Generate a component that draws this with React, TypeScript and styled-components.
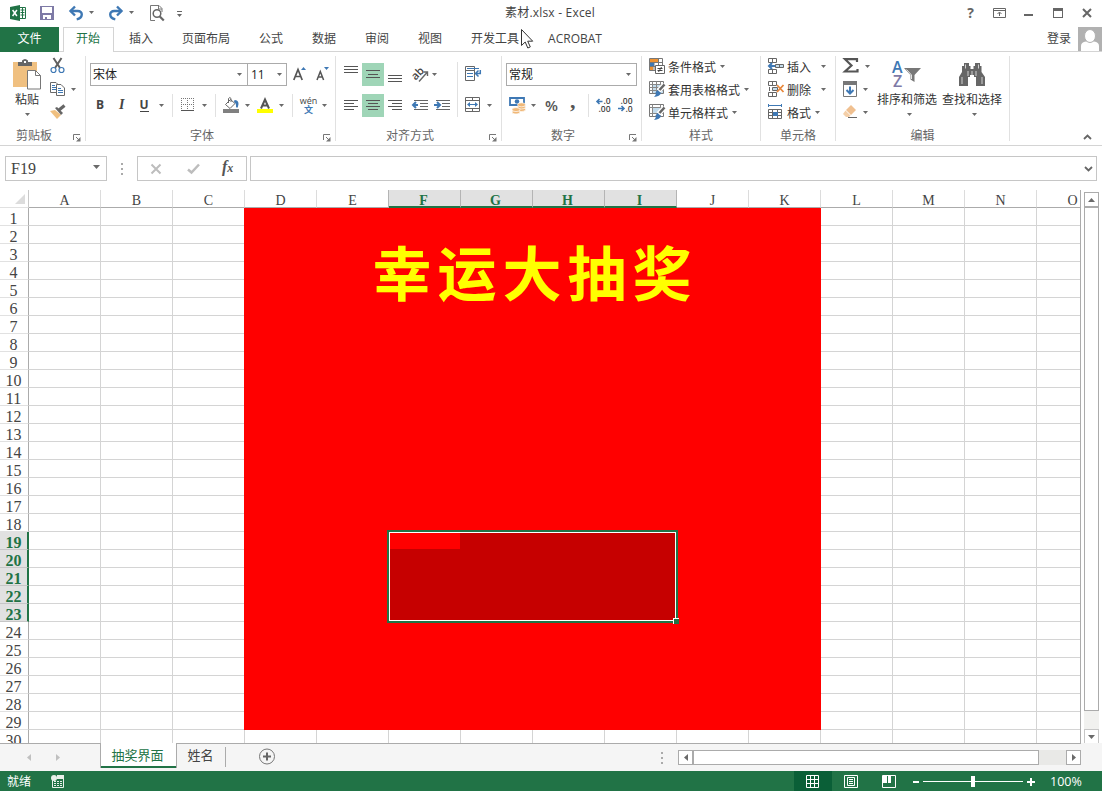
import React from "react";
import styled, { createGlobalStyle, css } from "styled-components";

const GREEN = "#217346";
const LINE = "#ababab";
const UI = `"Open Sans", "Noto Sans CJK SC", sans-serif`;
const SONG = `"Liberation Serif", "Noto Sans CJK SC", serif`;

const Global = createGlobalStyle`
  * { box-sizing: border-box; }
  body { margin: 0; background: #fff; font: 12px/16px ${UI}; color: #444; }
  button { font: inherit; color: inherit; background: none; border: 0; padding: 0; }
  svg { display: block; flex: none; overflow: visible; }
`;

const Window = styled.div`
  display: flex;
  flex-direction: column;
  width: 1102px;
  height: 791px;
  overflow: hidden;
  background: #fff;
`;

/* ---------- icons ---------- */

type IconProps = { w: number; h: number; children: React.ReactNode; crisp?: boolean };
const Icon = ({ w, h, children, crisp }: IconProps) => (
  <svg width={w} height={h} viewBox={`0 0 ${w} ${h}`} fill="none" shapeRendering={crisp ? "crispEdges" : undefined}>
    {children}
  </svg>
);
const Arrow = () => (
  <Icon w={5} h={3}><path d="M0 0h5L2.5 3z" fill="#6a6a6a" /></Icon>
);
const Lines = ({ rows, w = 15, h = 12 }: { rows: [number, number, number][]; w?: number; h?: number }) => (
  <Icon w={w} h={h} crisp>
    {rows.map(([x, y, len]) => <rect key={y} x={x} y={y} width={len} height={1} fill="#555" />)}
  </Icon>
);

const ExcelLogo = () => (
  <Icon w={16} h={16}>
    <path d="M9.5 2.5h6v11h-6" stroke={GREEN} fill="#fff" />
    <path d="M10.500 5h4M10.500 7.500h4M10.500 10h4M12.500 3v10" stroke={GREEN} />
    <path d="M0 2 10 0v16L0 14z" fill={GREEN} />
    <path d="m2.6 5 4.3 6M6.9 5l-4.3 6" stroke="#fff" strokeWidth="1.5" />
  </Icon>
);
const SaveIcon = () => (
  <Icon w={14} h={14} crisp>
    <path d="M0 0h14v14H0z" fill="#7e7aa6" />
    <path d="M2 1h10v6H2zM3 9h8v4H7v-2H5v2H3z" fill="#fff" />
  </Icon>
);
const UndoIcon = ({ flip }: { flip?: boolean }) => (
  <Icon w={14} h={16}>
    <g transform={flip ? "translate(14 0) scale(-1 1)" : undefined} stroke="#3e78b4" strokeWidth="2.4">
      <path d="M1.500 6h7.200c5.600 0 5.600 6.800-1 8.300" />
      <path d="M6 1.500 1.500 6 6 10.500" />
    </g>
  </Icon>
);
const PreviewIcon = () => (
  <Icon w={15} h={16}>
    <path d="M5 15.500H.5V.5h8.500l3 3V7" stroke="#777" />
    <path d="M8.500.5v3.500H12" stroke="#777" />
    <circle cx="7" cy="8.500" r="3.800" stroke="#666" strokeWidth="1.500" />
    <path d="m9.800 11.500 4 4" stroke="#666" strokeWidth="2.200" />
  </Icon>
);
const CustomizeIcon = () => (
  <Icon w={5} h={6}><path d="M0 .5h5" stroke="#666" /><path d="M0 3h5L2.500 6z" fill="#666" /></Icon>
);

const PasteIcon = () => (
  <Icon w={29} h={31}>
    <path d="M0 3h24v25H0z" fill="#f0c080" />
    <path d="M5 3h4V1.500Q12 -1.500 15 1.500V3h4v4H5z" fill="#666" />
    <path d="M11 2h2v2h-2z" fill="#fff" />
    <path d="M14.500 11.500h8l5 5v13.500h-13z" fill="#fff" stroke="#777" />
    <path d="M22.500 11.500v5h5" stroke="#777" />
  </Icon>
);
const CutIcon = () => (
  <Icon w={15} h={16}>
    <path d="m3.500 0 6.500 10M11.500 0 5 10" stroke="#606060" strokeWidth="2" />
    <circle cx="3.500" cy="12" r="2.500" stroke="#3e78b4" strokeWidth="1.200" />
    <circle cx="11.500" cy="12" r="2.500" stroke="#3e78b4" strokeWidth="1.200" />
  </Icon>
);
const CopyIcon = () => (
  <Icon w={15} h={14}>
    <path d="M.5.5H6L8.500 3v7.500h-8z" stroke="#6a6a6a" fill="#fff" />
    <path d="M2 3.500h3M2 5.500h4M2 7.500h4" stroke="#3e78b4" />
    <path d="M6.500 2.500H11l3.500 3.500v7.500h-8z" stroke="#6a6a6a" fill="#fff" />
    <path d="M8 6.500h3M8 8.500h5M8 10.500h5" stroke="#3e78b4" />
  </Icon>
);
const BrushIcon = () => (
  <Icon w={16} h={14}>
    <path d="m0 6 5-1 6 5-4 4z" fill="#f0c080" />
    <path d="m5 3 2-1 6 6-2 2z" fill="#666" />
    <path d="m9 5 5.500-4.500" stroke="#666" strokeWidth="3.200" />
  </Icon>
);
const FontSize = ({ small }: { small?: boolean }) => (
  <Icon w={14} h={17}>
    <path d={small ? "M8 1h5l-2.500 3z" : "M8 4h5l-2.500-3z"} fill="#3e78b4" />
    {small
      ? <path d="m1 14 3.300-8.500L7.600 14M2.300 11h4" stroke="#555" strokeWidth="1.500" />
      : <path d="m.8 14 4.200-10.500L9.200 14M2.300 10.500h5.400" stroke="#555" strokeWidth="1.700" />}
  </Icon>
);
const BordersIcon = () => (
  <Icon w={13} h={13} crisp>
    <path d="M0 .5h13M0 6.500h13M.5 0v13M6.500 0v13M12.500 0v13" stroke="#777" strokeDasharray="1 1" />
    <path d="M0 12.500h13" stroke="#555" />
  </Icon>
);
const FillIcon = () => (
  <Icon w={16} h={17}>
    <path d="m2.500 7.500 5-5 4.500 4-5 5z" stroke="#666" fill="#fff" />
    <path d="M5.500 6V1.500q1.500-2 2.500 0V5" stroke="#666" />
    <path d="M11.500 3q4 0 4 4-.3 3-1.500 4-1.500-1-1-3 0-2-2-3z" fill="#3e78b4" />
    <path d="M0 12h16v4H0z" fill="#808080" />
  </Icon>
);
const FontColorIcon = () => (
  <Icon w={16} h={17}>
    <path d="M4 11.500 8 2.500l4 9M5.500 8.500h5" stroke="#555" strokeWidth="2" />
    <path d="M0 12h16v4H0z" fill="#ff0" />
  </Icon>
);
const OrientIcon = () => (
  <Icon w={17} h={17}>
    <text x="0" y="12" transform="rotate(-45 5 9)" fontSize="11" fontWeight="600" fill="#444" fontFamily="Open Sans">ab</text>
    <path d="M7 15.500 15 6.500M11.500 6h4v4" stroke="#666" strokeWidth="1.400" />
  </Icon>
);
const WrapIcon = () => (
  <Icon w={16} h={17}>
    <path d="M.5.5h9v4h-9zM.5 4.500h9v10h-9z" stroke="#666" />
    <path d="M2 2.500h12M2 7.500h6M2 10.500h6" stroke="#3e78b4" />
    <path d="M15.300 4v3.500h-4M13.500 4.500l-3 3 3 3" stroke="#3e78b4" strokeWidth="1.500" />
  </Icon>
);
const MergeIcon = () => (
  <Icon w={15} h={17}>
    <path d="M.5.5h14v14H.5zM.5 3.500h14M.5 11.500h14M7.500.5v3M7.500 11.500v3" stroke="#666" />
    <path d="M3 7.500h9" stroke="#3e78b4" />
    <path d="M5 5v5L2 7.500zM10 5v5l3-2.500z" fill="#3e78b4" />
  </Icon>
);
const IndentIcon = ({ right }: { right?: boolean }) => (
  <Icon w={16} h={11}>
    <path d="M2 .5h14M8 3.500h8M8 6.500h8M2 9.500h14" stroke="#666" />
    <path d="M-1 2h8v6h-8z" fill="#fff" />
    <path d={right ? "M0 5h5M3 2l3 3-3 3" : "M6 5H1M4 2 1 5l3 3"} stroke="#3e78b4" strokeWidth="2" />
  </Icon>
);
const CurrencyIcon = () => (
  <Icon w={17} h={17}>
    <path d="M1 1h14v7H1z" stroke="#3e78b4" strokeWidth="1.800" fill="#fff" />
    <circle cx="8" cy="4.500" r="2.300" fill="#3e78b4" />
    <g fill="#f0b878" stroke="#fff" strokeWidth=".7">
      <ellipse cx="12.500" cy="12.500" rx="4" ry="2" /><ellipse cx="12.500" cy="10" rx="4" ry="2" />
      <ellipse cx="12.500" cy="7.800" rx="4" ry="2" />
      <ellipse cx="7" cy="15" rx="4" ry="2" /><ellipse cx="7" cy="12.600" rx="4" ry="2" />
    </g>
  </Icon>
);
const DecimalIcon = ({ less }: { less?: boolean }) => (
  <Icon w={15} h={17}>
    <g fontFamily="Open Sans" fontSize="8.500" fontWeight="600" fill="#444">
      <text x={less ? 2.500 : 7.500} y="7">{less ? ".00" : ".0"}</text>
      <text x={less ? 7.500 : 2.500} y="14.500">{less ? ".0" : ".00"}</text>
    </g>
    <path d={less ? "M0 11.500h5M3.500 9 6 11.500 3.500 14" : "M6.500 4.500h-5M3.500 2 1 4.500 3.500 7"} stroke="#3e78b4" strokeWidth="1.600" />
  </Icon>
);
const CondFormatIcon = () => (
  <Icon w={16} h={16}>
    <path d="M.5.5h13v12H.5zM.5 4.500h13M.5 8.500h13M5 .5v12M9.500.5v12" stroke="#777" />
    <path d="M1 1h8v3H1z" fill="#ed9232" /><path d="M1 5h4v3H1z" fill="#3e78b4" /><path d="M1 9h3v3H1z" fill="#ed9232" />
    <path d="M6.500 7.500h9v8h-9z" fill="#fff" stroke="#666" />
    <path d="M8.500 10.500h5M8.500 12.500h5M12.500 9l-3 5" stroke="#444" />
  </Icon>
);
const TableFormatIcon = ({ single }: { single?: boolean }) => (
  <Icon w={16} h={16}>
    <path d="M.5.5h14v12H.5z" stroke="#777" fill="#fff" />
    {single
      ? <path d="M4 4h7v5H4z" fill="#c4dcec" />
      : <path d="M4 4h10v8H4z" fill="#c4dcec" />}
    <path d="M.5 3.500h14M3.500.5v12M11.500.5v12M.5 9.500h14" stroke="#888" />
    {!single && <path d="M7.500.5v12M.5 6.500h14" stroke="#888" />}
    <path d="M15.500 3.500 9.500 10" stroke="#fff" strokeWidth="5" />
    <path d="M15.500 3.500 10.500 9" stroke="#666" strokeWidth="2.600" />
    <path d="m8.500 9 3.500 3q-1 3.500-7 4 2.500-2.500 1.500-4.500z" fill="#3e78b4" />
  </Icon>
);
const CellsIcon = ({ kind }: { kind: "insert" | "delete" | "format" }) => (
  <Icon w={16} h={16}>
    {kind === "format" ? (
      <>
        <path d="M1 1.500h12M.5 0v3M13.500 0v3" stroke="#3e78b4" />
        <path d="M.5 5.500h13v9H.5zM.5 8.500h13M.5 11.500h13M4.500 5.500v9M9.500 5.500v9" stroke="#666" />
        <path d="M5 8h5v4H5z" fill="#3e78b4" />
      </>
    ) : (
      <>
        <path d="M.5.5h8v4h-8zM4.500.5v4M.5 11.500h8v4h-8zM4.500 11.500v4" stroke="#666" fill="#fff" />
        {kind === "insert" ? (
          <>
            <path d="M7.500 6.500h8v3h-8zM11.500 6.500v3" fill="#c4dcec" stroke="#666" />
            <path d="M7 8H2M4 5 1 8l3 3" stroke="#3e78b4" strokeWidth="2" />
          </>
        ) : (
          <>
            <path d="M4.500 6.500h5v3h-5zM1.500 6v4" fill="#c4dcec" stroke="#666" />
            <path d="m9 4 6.500 7M15.500 4 9 11" stroke="#e8873a" strokeWidth="1.800" />
          </>
        )}
      </>
    )}
  </Icon>
);
const SigmaIcon = () => (
  <Icon w={16} h={16}><path d="M14 4V1.200H2L8.500 7.500 2 13.500h12.500V11" stroke="#555" strokeWidth="2.200" /></Icon>
);
const FillDownIcon = () => (
  <Icon w={14} h={16}>
    <path d="M.5.5h13v15H.5z" stroke="#777" /><path d="M0 0h14v4H0z" fill="#777" />
    <path d="M7 5.500v7M3.500 9 7 12.500 10.500 9" stroke="#3e78b4" strokeWidth="2" />
  </Icon>
);
const EraserIcon = () => (
  <Icon w={14} h={14}>
    <path d="m8 0 5 5-5 5-5-5z" fill="#f0c090" /><path d="m2.500 5.500 5 5-1.500 1.500H3L0 9z" fill="#f4cfa8" />
    <path d="M5 12.500h9" stroke="#666" />
  </Icon>
);
const SortIcon = () => (
  <Icon w={30} h={27}>
    <g fontFamily="Open Sans" fontSize="16" fontWeight="600">
      <text x="0" y="12" fill="#3e78b4">A</text><text x="1" y="26" fill="#7e7aa6">Z</text>
    </g>
    <path d="M12 7h17l-6.500 7v7l-4-2.500V14z" fill="#777" /><path d="m14.500 8.500 5 5.500v4" stroke="#fff" strokeWidth=".8" />
  </Icon>
);
const FindIcon = () => (
  <Icon w={26} h={25}>
    <path d="M5 1h5v3h1.500v3h3V4H16V1h5v3h1.500v6l3.500 5v9h-9v-9h-2v-2h-4v2H9v9H0v-9l3-5V4h2z" fill="#666" />
    <path d="M6.500 2.500v4M9 9v5M3 15v7M23 15v7M19.500 2.500v4M17 9v5M13 9v4" stroke="#ddd" strokeWidth=".9" />
  </Icon>
);
const LauncherIcon = () => (
  <Icon w={8} h={8}>
    <path d="M.5 6V.5H7" stroke="#777" /><path d="m3 3 3 3" stroke="#777" /><path d="M7.500 3v4.500H3z" fill="#777" />
  </Icon>
);
const Chevron = ({ down }: { down?: boolean }) => (
  <Icon w={9} h={6}><path d={down ? "m1 1 3.500 3.500L8 1" : "M1 5l3.500-3.500L8 5"} stroke="#666" strokeWidth="1.800" /></Icon>
);
const Triangle = ({ dir, color = "#6a6a6a" }: { dir: "up" | "down" | "left" | "right"; color?: string }) => {
  const d = { up: "M0 4h7L3.500 0z", down: "M0 0h7L3.500 4z", left: "M4 0v7L0 3.500z", right: "M0 0v7l4-3.500z" }[dir];
  const wide = dir === "up" || dir === "down";
  return <Icon w={wide ? 7 : 4} h={wide ? 4 : 7}><path d={d} fill={color} /></Icon>;
};

/* ---------- title bar ---------- */

const TitleBar = styled.header`
  display: grid;
  grid-template-columns: 400px 300px 402px;
  height: 27px;
`;
const Title = styled.div`
  text-align: center;
  line-height: 26px;
  letter-spacing: 0.2px;
`;
const QuickAccess = styled.div`
  display: flex;
  align-items: center;
  height: 26px;
  padding-left: 10px;
`;
const WindowButtons = styled.div`
  display: flex;
  align-items: center;
  justify-content: flex-end;
  height: 26px;
  padding-right: 10px;
`;
const Tool = styled.button<{ $left?: number; $top?: number }>`
  display: flex;
  align-items: center;
  flex: none;
  margin-left: ${(p) => p.$left ?? 0}px;
  margin-top: ${(p) => p.$top ?? 0}px;
`;
const HelpMark = styled.span`
  font-weight: 700;
  font-size: 14px;
  color: #666;
`;

/* ---------- ribbon tabs ---------- */

const TabBar = styled.nav`
  display: flex;
  height: 25px;
  line-height: 24px;
  border-bottom: 1px solid #d4d4d4;
`;
const FileTab = styled.div`
  width: 59px;
  height: 25px;
  background: ${GREEN};
  color: #fff;
  text-align: center;
`;
const ActiveTab = styled.div`
  width: 51px;
  height: 25px;
  margin-left: 4px;
  padding-right: 1px;
  border: 1px solid #d4d4d4;
  border-bottom: 0;
  background: #fff;
  color: ${GREEN};
  text-align: center;
  line-height: 22px;
`;
const TabList = styled.div`
  display: flex;
  flex: 1;
  gap: 29px;
  padding-left: 15px;
  white-space: nowrap;
`;
const Account = styled.div`
  display: flex;
  gap: 7px;
  line-height: 23px;
`;
const Avatar = styled.div`
  width: 24px;
  height: 24px;
  background: #b1b1b1;
`;
const Cursor = styled.div`
  position: absolute;
  left: 521px;
  top: 29px;
`;

/* ---------- ribbon ---------- */

const Ribbon = styled.section`
  display: flex;
  height: 94px;
  padding-top: 4px;
  border-bottom: 1px solid #d4d4d4;
  line-height: 16px;
`;
const Group = styled.div<{ $w: number }>`
  display: flex;
  flex-direction: column;
  width: ${(p) => p.$w}px;
  height: 85px;
  border-right: 1px solid #e1e1e1;
`;
const GroupBody = styled.div<{ $column?: boolean }>`
  display: flex;
  flex: none;
  flex-direction: ${(p) => (p.$column ? "column" : "row")};
  height: 72px;
`;
const GroupFooter = styled.div`
  display: flex;
  flex: none;
  height: 13px;
  line-height: 16px;
  color: #666;
`;
const GroupLabel = styled.span`
  flex: 1;
  text-align: center;
`;
const Launcher = styled.span`
  width: 12px;
  padding-top: 6px;
  margin-left: 5px;
`;
const ToolRow = styled.div<{ $pad?: number; $top?: number }>`
  display: flex;
  align-items: center;
  height: 23px;
  margin-top: ${(p) => p.$top ?? 0}px;
  padding-left: ${(p) => p.$pad ?? 0}px;
`;
const Divider = styled.span<{ $left: number; $h?: number }>`
  flex: none;
  width: 1px;
  height: ${(p) => p.$h ?? 23}px;
  margin-left: ${(p) => p.$left}px;
  background: #e1e1e1;
`;
const Combo = styled.div<{ $w: number; $joined?: boolean }>`
  display: flex;
  flex: none;
  align-items: center;
  justify-content: space-between;
  width: ${(p) => p.$w}px;
  height: 23px;
  padding: 0 5px 0 2px;
  border: 1px solid ${LINE};
  ${(p) => p.$joined && css`border-left: 0; padding: 0 4px 0 3px;`}
  color: #222;
`;
const Toggle = styled.button`
  display: flex;
  align-items: center;
  justify-content: center;
  width: 22px;
  height: 23px;
  margin-left: 3px;
  background: #9fd5b7;
`;
const BigButton = styled.div<{ $w: number; $left: number }>`
  display: flex;
  flex-direction: column;
  align-items: center;
  width: ${(p) => p.$w}px;
  margin-left: ${(p) => p.$left}px;
  white-space: nowrap;
  color: #333;
`;
const BigIcon = styled.span`
  display: flex;
  align-items: center;
  height: 37px;
  margin-bottom: -1px;
`;
const BigArrow = styled.span<{ $shift?: number }>`
  margin-top: 5px;
  padding-left: ${(p) => p.$shift ?? 0}px;
`;
const Stack = styled.div<{ $left: number; $lift?: boolean }>`
  display: flex;
  flex-direction: column;
  margin-left: ${(p) => p.$left}px;
  margin-top: ${(p) => (p.$lift ? -1 : 0)}px;
  color: #333;
`;
const StackRow = styled.div<{ $arrow?: number }>`
  display: flex;
  align-items: center;
  height: 22px;
  margin-bottom: 1px;
  gap: 3px;
  white-space: nowrap;
  svg:not(:first-child) {
    margin-left: ${(p) => p.$arrow ?? 1}px;
    margin-top: 1px;
  }
`;
const Caption = styled.span`
  padding-top: 3px;
  line-height: 17px;
`;
const Letter = styled.span<{ $kind: "b" | "i" | "u" }>`
  font-weight: 700;
  line-height: 15px;
  margin-bottom: 2px;
  color: #444;
  ${(p) => p.$kind === "i" && css`font-family: "Liberation Serif"; font-size: 14px; font-style: italic;`}
  ${(p) => p.$kind === "u" && css`margin-bottom: 0; line-height: 12px; border-bottom: 1px solid #444;`}
`;
const Pinyin = styled.span`
  display: flex;
  flex-direction: column;
  align-items: center;
  width: 16px;
  font: 9px/8px ${UI};
  b { font: 700 9px/9px "Noto Sans CJK SC"; color: #3e78b4; }
`;
const Percent = styled.span`
  margin-bottom: 2px;
  font-size: 15px;
  font-weight: 600;
  color: #555;
`;
const Comma = styled.span`
  font: 700 22px/12px "Liberation Serif";
  height: 22px;
  color: #555;
`;
const AlignTop = styled.div`
  display: flex;
  flex-direction: column;
  width: 121px;
`;
const Collapse = styled.div`
  display: flex;
  flex: 1;
  align-items: flex-end;
  justify-content: flex-end;
  padding: 0 10px 5px 0;
`;

/* ---------- formula bar ---------- */

const FormulaBar = styled.section`
  display: flex;
  height: 44px;
  padding: 10px 5px 0;
`;
const Field = styled.div<{ $w?: number; $left?: number }>`
  display: flex;
  align-items: center;
  justify-content: space-between;
  ${(p) => (p.$w ? `width: ${p.$w}px;` : "flex: 1;")}
  height: 25px;
  margin-left: ${(p) => p.$left ?? 0}px;
  padding: 0 3px 0 5px;
  border: 1px solid #c6c6c6;
  font: 16px/22px ${SONG};
`;
const NameBox = styled(Field)`
  padding-right: 6px;
  & > svg { margin-bottom: 3px; }
`;
const FieldTools = styled(Field)`
  justify-content: flex-start;
  padding-left: 13px;
`;
const Fx = styled.span`
  margin: 0 0 2px 22px;
  font: italic 700 16px/16px "Liberation Serif";
  color: #555;
  small { font-size: 12px; }
`;
const Dots = styled.span<{ $left: number; $top: number }>`
  display: flex;
  flex-direction: column;
  gap: 3px;
  width: 2px;
  margin: ${(p) => p.$top}px 0 0 ${(p) => p.$left}px;
  i { width: 2px; height: 2px; background: #aaa; }
`;

/* ---------- worksheet ---------- */

const Sheet = styled.main`
  display: flex;
  height: 553px;
`;
const Grid = styled.div`
  position: relative;
  width: 1081px;
  height: 553px;
  overflow: hidden;
  border-right: 1px solid ${LINE};
`;
const GridRow = styled.div`
  display: flex;
  width: 1109px;
  height: 18px;
`;
const Corner = styled.div`
  display: flex;
  flex: none;
  align-items: flex-end;
  justify-content: flex-end;
  width: 29px;
  height: 18px;
  padding: 0 3px 3px 0;
  border-right: 1px solid #c8c8c8;
  border-bottom: 1px solid #e1e1e1;
`;
const ColHead = styled.div<{ $on: boolean; $beforeOn: boolean }>`
  flex: none;
  width: 72px;
  height: 18px;
  padding-right: ${(p) => (p.$on ? 2 : 0)}px;
  border-right: 1px solid ${(p) => (p.$on || p.$beforeOn ? "#b4b4b4" : "#dcdcdc")};
  border-bottom: ${(p) => (p.$on ? `2px solid ${GREEN}` : `1px solid ${LINE}`)};
  background: ${(p) => (p.$on ? "#e1e1e1" : "#fff")};
  color: ${(p) => (p.$on ? GREEN : "#444")};
  font: ${(p) => (p.$on ? 700 : 400)} 14px/22px ${SONG};
  text-align: center;
`;
const RowHead = styled.div<{ $on: boolean }>`
  flex: none;
  width: 29px;
  height: 18px;
  padding-right: ${(p) => (p.$on ? 0 : 1)}px;
  border-right: ${(p) => (p.$on ? `2px solid ${GREEN}` : `1px solid ${LINE}`)};
  border-bottom: 1px solid ${(p) => (p.$on ? "#c6c6c6" : "#e1e1e1")};
  background: ${(p) => (p.$on ? "#e1e1e1" : "#fff")};
  color: ${(p) => (p.$on ? GREEN : "#444")};
  font: ${(p) => (p.$on ? 700 : 400)} 16px/21px ${SONG};
  text-align: center;
`;
const Cell = styled.div<{ $red: boolean; $first: boolean }>`
  flex: none;
  width: 72px;
  height: 18px;
  border: 0 solid ${(p) => (p.$red ? "#f00" : "#d4d4d4")};
  border-width: 0 1px 1px 0;
  background: ${(p) => (p.$red ? "#f00" : "#fff")};
  ${(p) => p.$first && css`
    width: 73px;
    margin-left: -1px;
  `}
`;
const Banner = styled.div`
  position: absolute;
  left: 247px;
  top: 34px;
  width: 576px;
  text-align: center;
  font: 700 59px/94px "Noto Sans CJK SC", sans-serif;
  letter-spacing: 6px;
  color: #ff0;
`;
const Selection = styled.div`
  position: absolute;
  left: 387px;
  top: 340px;
  width: 291px;
  height: 93px;
  border: 2px solid ${GREEN};
`;
const SelectionFill = styled.div`
  height: 89px;
  border: 1px solid #fff;
  background: #c60000;
`;
const ActiveCell = styled.div`
  width: 70px;
  height: 16px;
  background: #f00;
`;
const FillHandle = styled.div`
  position: absolute;
  right: -3px;
  bottom: -3px;
  width: 6px;
  height: 6px;
  border: solid #fff;
  border-width: 1px 0 0 1px;
  background: ${GREEN};
`;
const VScroll = styled.div`
  display: flex;
  flex-direction: column;
  width: 15px;
  height: 552px;
  margin: 2px 0 0 3px;
  background: #f1f1ef;
`;
const ScrollButton = styled.div<{ $light?: boolean }>`
  display: flex;
  flex: none;
  align-items: center;
  justify-content: center;
  width: 15px;
  height: 15px;
  border: 1px solid ${(p) => (p.$light ? "#c6c6c6" : LINE)};
  background: #fff;
`;
const VThumb = styled.div`
  height: 504px;
  margin-bottom: auto;
  border: 1px solid ${LINE};
  background: #fff;
`;

/* ---------- sheet tabs ---------- */

const SheetTabs = styled.footer`
  display: flex;
  height: 28px;
  background: #f5f5f5;
  font-size: 13px;
`;
const TabNav = styled.div`
  display: flex;
  align-items: center;
  gap: 25px;
  width: 100px;
  padding-left: 27px;
  border-top: 1px solid ${LINE};
`;
const CurrentSheet = styled.div`
  width: 77px;
  height: 25px;
  padding-right: 2px;
  border: solid ${LINE};
  border-width: 0 1px;
  background: #fff;
  color: ${GREEN};
  text-align: center;
  line-height: 24px;
  box-shadow: inset 0 -2px ${GREEN};
`;
const TabRest = styled.div`
  display: flex;
  width: 904px;
  border-top: 1px solid ${LINE};
`;
const OtherSheet = styled.div`
  width: 49px;
  height: 20px;
  margin-top: 3px;
  padding-right: 1px;
  border-right: 1px solid ${LINE};
  text-align: center;
  line-height: 17px;
`;
const AddSheet = styled.div`
  margin: 4px 0 0 33px;
`;
const HScroll = styled.div`
  display: flex;
  width: 403px;
  height: 15px;
  margin: 6px 0 0 15px;
  background: #e9e9e7;
`;
const HThumb = styled.div`
  width: 346px;
  margin-right: auto;
  border: 1px solid ${LINE};
  background: #fff;
`;

/* ---------- status bar ---------- */

const StatusBar = styled.footer`
  display: flex;
  align-items: center;
  height: 20px;
  padding-left: 7px;
  background: ${GREEN};
  color: #fff;
  line-height: 18px;
`;
const Ready = styled.span`
  padding-top: 2px;
`;
const MacroButton = styled.span`
  flex: 1;
  padding: 1px 0 0 20px;
`;
const ViewButton = styled.span<{ $on?: boolean }>`
  display: flex;
  align-items: center;
  justify-content: center;
  width: 38px;
  height: 20px;
  padding: 1px 1px 0 0;
  background: ${(p) => (p.$on ? "#0a5f37" : "transparent")};
`;
const Zoom = styled.div`
  display: flex;
  align-items: center;
  width: 194px;
  padding: 1px 0 0 5px;
`;
const ZoomValue = styled.span`
  margin-left: 15px;
  font-size: 12.5px;
`;

const TABS = ["插入", "页面布局", "公式", "数据", "审阅", "视图", "开发工具", "ACROBAT"];
const COLUMNS = "ABCDEFGHIJKLMNO".split("");
const ROWS = Array.from({ length: 30 }, (_, i) => i + 1);

const Footer = ({ label, launcher }: { label: string; launcher?: boolean }) => (
  <GroupFooter>
    <GroupLabel>{label}</GroupLabel>
    {launcher && <Launcher><LauncherIcon /></Launcher>}
  </GroupFooter>
);

const App = () => (
  <Window>
    <Global />
    <TitleBar>
      <QuickAccess>
        <Tool><ExcelLogo /></Tool>
        <Tool $left={14}><SaveIcon /></Tool>
        <Tool $left={15}><UndoIcon /></Tool>
        <Tool $left={6} $top={-1}><Arrow /></Tool>
        <Tool $left={15}><UndoIcon flip /></Tool>
        <Tool $left={6} $top={-1}><Arrow /></Tool>
        <Tool $left={16}><PreviewIcon /></Tool>
        <Tool $left={12} $top={2}><CustomizeIcon /></Tool>
      </QuickAccess>
      <Title>素材.xlsx - Excel</Title>
      <WindowButtons>
        <HelpMark>?</HelpMark>
        <Tool $left={19}>
          <Icon w={13} h={10}><path d="M.5.500h12v9H.5zM.5 2.500h12M6.500 8V4.500M4.500 6l2-2 2 2" stroke="#666" /></Icon>
        </Tool>
        <Tool $left={18} $top={4}><Icon w={9} h={2} crisp><path d="M0 0h9v2H0z" fill="#666" /></Icon></Tool>
        <Tool $left={20}><Icon w={10} h={10} crisp><path d="M.5 1.500h9v8h-9z" stroke="#666" /><path d="M0 0h10v3H0z" fill="#666" /></Icon></Tool>
        <Tool $left={19}><Icon w={10} h={10}><path d="m1 1 8 8M9 1 1 9" stroke="#666" strokeWidth="2" /></Icon></Tool>
      </WindowButtons>
    </TitleBar>

    <TabBar>
      <FileTab>文件</FileTab>
      <ActiveTab>开始</ActiveTab>
      <TabList>{TABS.map((t) => <span key={t}>{t}</span>)}</TabList>
      <Account>
        登录
        <Avatar>
          <Icon w={24} h={24}>
            <path d="M3 24v-5q0-4 5-4.500h8q5 .5 5 4.500v5z" fill="#fff" />
            <ellipse cx="12" cy="9" rx="5.500" ry="6.500" fill="#fff" stroke="#b1b1b1" />
          </Icon>
        </Avatar>
      </Account>
    </TabBar>

    <Ribbon>
      <Group $w={86}>
        <GroupBody>
          <BigButton $w={30} $left={12}>
            <BigIcon><PasteIcon /></BigIcon>
            粘贴
            <BigArrow><Arrow /></BigArrow>
          </BigButton>
          <Stack $left={8} $lift>
            <StackRow><CutIcon /></StackRow>
            <StackRow $arrow={3}><CopyIcon /><Arrow /></StackRow>
            <StackRow><BrushIcon /></StackRow>
          </Stack>
        </GroupBody>
        <Footer label="剪贴板" launcher />
      </Group>

      <Group $w={250}>
        <GroupBody $column>
          <ToolRow $pad={4} $top={7}>
            <Combo $w={158}>宋体<Arrow /></Combo>
            <Combo $w={39} $joined>11<Arrow /></Combo>
            <Tool $left={6}><FontSize /></Tool>
            <Tool $left={9}><FontSize small /></Tool>
          </ToolRow>
          <ToolRow $pad={10} $top={8}>
            <Letter $kind="b">B</Letter>
            <Tool $left={15}><Letter $kind="i">I</Letter></Tool>
            <Tool $left={15}><Letter $kind="u">U</Letter></Tool>
            <Tool $left={10}><Arrow /></Tool>
            <Divider $left={8} />
            <Tool $left={8} $top={-2}><BordersIcon /></Tool>
            <Tool $left={8}><Arrow /></Tool>
            <Divider $left={8} />
            <Tool $left={7}><FillIcon /></Tool>
            <Tool $left={6}><Arrow /></Tool>
            <Tool $left={7}><FontColorIcon /></Tool>
            <Tool $left={6}><Arrow /></Tool>
            <Divider $left={8} />
            <Tool $left={8}><Pinyin>wén<b>文</b></Pinyin></Tool>
            <Tool $left={5}><Arrow /></Tool>
          </ToolRow>
        </GroupBody>
        <Footer label="字体" launcher />
      </Group>

      <Group $w={166}>
        <GroupBody>
          <AlignTop>
            <ToolRow $pad={8} $top={7}>
              <Lines h={17} rows={[[0, 0, 14], [0, 3, 14], [0, 6, 14]]} />
              <Toggle><Lines w={14} h={9} rows={[[0, 0, 14], [2, 4, 10], [0, 7, 14]]} /></Toggle>
              <Tool $left={4}><Lines w={14} h={17} rows={[[0, 9, 14], [0, 12, 14], [0, 15, 14]]} /></Tool>
              <Tool $left={10}><OrientIcon /></Tool>
              <Tool $left={3}><Arrow /></Tool>
            </ToolRow>
            <ToolRow $pad={8} $top={8}>
              <Lines h={11} rows={[[0, 0, 14], [0, 3, 10], [0, 6, 14], [0, 9, 10]]} />
              <Toggle><Lines w={14} h={11} rows={[[0, 0, 14], [2, 3, 10], [0, 6, 14], [2, 9, 10]]} /></Toggle>
              <Tool $left={4}><Lines w={14} h={11} rows={[[0, 0, 14], [4, 3, 10], [0, 6, 14], [4, 9, 10]]} /></Tool>
              <Tool $left={10}><IndentIcon /></Tool>
              <Tool $left={6}><IndentIcon right /></Tool>
            </ToolRow>
          </AlignTop>
          <ToolRow $top={22}><Divider $left={0} $h={55} /></ToolRow>
          <Stack $left={7}>
            <ToolRow $top={7}><WrapIcon /></ToolRow>
            <ToolRow $top={8}><MergeIcon /><Tool $left={7}><Arrow /></Tool></ToolRow>
          </Stack>
        </GroupBody>
        <Footer label="对齐方式" launcher />
      </Group>

      <Group $w={140}>
        <GroupBody $column>
          <ToolRow $pad={4} $top={7}><Combo $w={131}>常规<Arrow /></Combo></ToolRow>
          <ToolRow $pad={7} $top={8}>
            <CurrencyIcon />
            <Tool $left={5}><Arrow /></Tool>
            <Tool $left={9}><Percent>%</Percent></Tool>
            <Tool $left={12}><Comma>,</Comma></Tool>
            <Divider $left={13} />
            <Tool $left={7}><DecimalIcon /></Tool>
            <Tool $left={7}><DecimalIcon less /></Tool>
          </ToolRow>
        </GroupBody>
        <Footer label="数字" launcher />
      </Group>

      <Group $w={119}>
        <GroupBody>
          <Stack $left={7} $lift>
            <StackRow><CondFormatIcon /><Caption>条件格式</Caption><Arrow /></StackRow>
            <StackRow><TableFormatIcon /><Caption>套用表格格式</Caption><Arrow /></StackRow>
            <StackRow><TableFormatIcon single /><Caption>单元格样式</Caption><Arrow /></StackRow>
          </Stack>
        </GroupBody>
        <Footer label="样式" />
      </Group>

      <Group $w={75}>
        <GroupBody>
          <Stack $left={7} $lift>
            <StackRow $arrow={7}><CellsIcon kind="insert" /><Caption>插入</Caption><Arrow /></StackRow>
            <StackRow $arrow={7}><CellsIcon kind="delete" /><Caption>删除</Caption><Arrow /></StackRow>
            <StackRow><CellsIcon kind="format" /><Caption>格式</Caption><Arrow /></StackRow>
          </Stack>
        </GroupBody>
        <Footer label="单元格" />
      </Group>

      <Group $w={174}>
        <GroupBody>
          <Stack $left={7} $lift>
            <StackRow $arrow={3}><SigmaIcon /><Arrow /></StackRow>
            <StackRow $arrow={3}><FillDownIcon /><Arrow /></StackRow>
            <StackRow $arrow={3}><EraserIcon /><Arrow /></StackRow>
          </Stack>
          <BigButton $w={60} $left={7}>
            <BigIcon><SortIcon /></BigIcon>
            排序和筛选
            <BigArrow $shift={4}><Arrow /></BigArrow>
          </BigButton>
          <BigButton $w={60} $left={5}>
            <BigIcon><FindIcon /></BigIcon>
            查找和选择
            <BigArrow $shift={4}><Arrow /></BigArrow>
          </BigButton>
        </GroupBody>
        <Footer label="编辑" />
      </Group>
      <Collapse><Chevron /></Collapse>
    </Ribbon>

    <FormulaBar>
      <NameBox $w={102}>F19<Triangle dir="down" /></NameBox>
      <Dots $left={14} $top={7}><i /><i /><i /></Dots>
      <FieldTools $w={110} $left={14}>
        <Icon w={10} h={10}><path d="m.5.500 9 9M9.500.500l-9 9" stroke="#bdbdbd" strokeWidth="2" /></Icon>
        <Tool $left={26}><Icon w={13} h={10}><path d="m1 5.500 3.500 3L12 .5" stroke="#bdbdbd" strokeWidth="2.500" /></Icon></Tool>
        <Fx>f<small>x</small></Fx>
      </FieldTools>
      <Field $left={3}><span /><Chevron down /></Field>
    </FormulaBar>

    <Sheet>
      <Grid>
        <GridRow>
          <Corner><Icon w={10} h={10}><path d="M10 0v10H0z" fill="#dcdcdc" /></Icon></Corner>
          {COLUMNS.map((c) => (
            <ColHead key={c} $on={"FGHI".includes(c)} $beforeOn={c === "E"}>{c}</ColHead>
          ))}
        </GridRow>
        {ROWS.map((r) => (
          <GridRow key={r}>
            <RowHead $on={r >= 19 && r <= 23}>{r}</RowHead>
            {COLUMNS.map((c) => (
              <Cell key={c} $red={r < 30 && c >= "D" && c <= "K"} $first={r < 30 && c === "D"} />
            ))}
          </GridRow>
        ))}
        <Banner>幸运大抽奖</Banner>
        <Selection>
          <SelectionFill><ActiveCell /></SelectionFill>
          <FillHandle />
        </Selection>
      </Grid>
      <VScroll>
        <ScrollButton><Triangle dir="up" /></ScrollButton>
        <VThumb />
        <ScrollButton $light><Triangle dir="down" /></ScrollButton>
      </VScroll>
    </Sheet>

    <SheetTabs>
      <TabNav><Triangle dir="left" color="#c0c0c0" /><Triangle dir="right" color="#c0c0c0" /></TabNav>
      <CurrentSheet>抽奖界面</CurrentSheet>
      <TabRest>
        <OtherSheet>姓名</OtherSheet>
        <AddSheet>
          <Icon w={17} h={17}>
            <circle cx="8" cy="8.500" r="7.500" stroke="#777" /><path d="M4 8.500h8M8 4.500v8" stroke="#666" strokeWidth="2" />
          </Icon>
        </AddSheet>
        <Dots $left={385} $top={8}><i /><i /><i /></Dots>
        <HScroll>
          <ScrollButton><Triangle dir="left" /></ScrollButton>
          <HThumb />
          <ScrollButton><Triangle dir="right" /></ScrollButton>
        </HScroll>
      </TabRest>
    </SheetTabs>

    <StatusBar>
      <Ready>就绪</Ready>
      <MacroButton>
        <Icon w={13} h={13}>
          <path d="M1.500 5v7.500h11V.5H6" stroke="#e8f0ea" /><path d="M6 0h7v4H6z" fill="#e8f0ea" />
          <path d="M3 6.500h8M3 8.500h8M3 10.500h8" stroke="#e8f0ea" strokeDasharray="2 1" /><circle cx="3" cy="3" r="3" fill="#e8f0ea" />
        </Icon>
      </MacroButton>
      <ViewButton $on><Icon w={13} h={13}><path d="M.5.500h12v12H.5zM.5 4.500h12M.5 8.500h12M4.500.5v12M8.500.5v12" stroke="#fff" /></Icon></ViewButton>
      <ViewButton><Icon w={13} h={13}><path d="M.5.500h13v12H.5zM3.500 2.500h7v8h-7zM5 4.500h4M5 6.500h4M5 8.500h4" stroke="#fff" /></Icon></ViewButton>
      <ViewButton><Icon w={13} h={13}><path d="M.5.500h13v12H.5z" stroke="#fff" /><path d="M1 0h4v8H1zM6 0h3v8H6z" fill="#fff" /></Icon></ViewButton>
      <Zoom>
        <Icon w={6} h={2} crisp><path d="M0 0h6v2H0z" fill="#fff" /></Icon>
        <Tool $left={4}>
          <Icon w={100} h={11} crisp><path d="M0 5h100v1H0zM48 0h4v11h-4z" fill="#fff" /></Icon>
        </Tool>
        <Tool $left={4}><Icon w={8} h={8} crisp><path d="M0 3h8v2H0zM3 0h2v8H3z" fill="#fff" /></Icon></Tool>
        <ZoomValue>100%</ZoomValue>
      </Zoom>
    </StatusBar>

    <Cursor>
      <Icon w={13} h={20}>
        <path d="M.5.500v16l3.700-3.500 2.600 6 2.500-1.100-2.600-5.700h5z" fill="#fff" stroke="#333" />
      </Icon>
    </Cursor>
  </Window>
);

export default App;
